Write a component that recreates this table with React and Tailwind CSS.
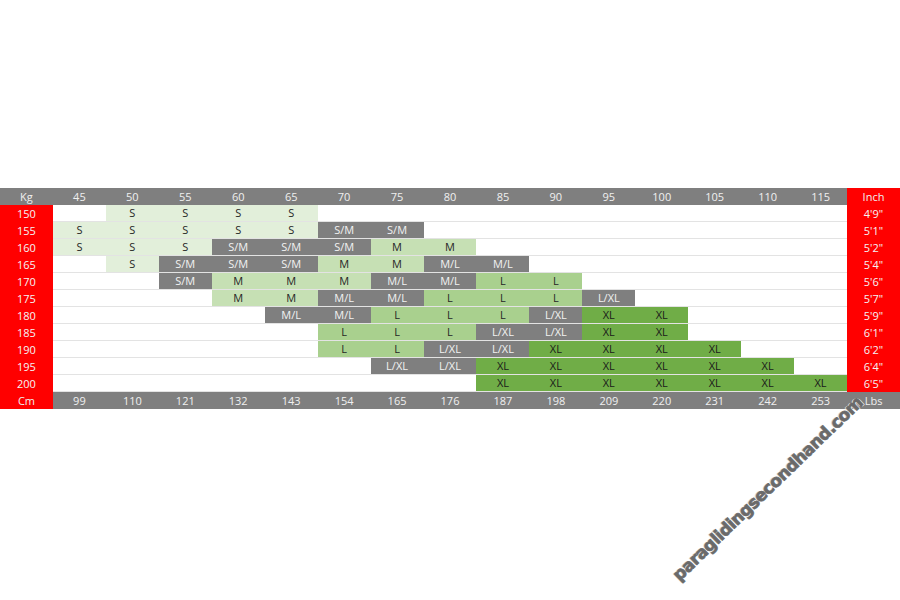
import React from "react";

const weights = [45, 50, 55, 60, 65, 70, 75, 80, 85, 90, 95, 100, 105, 110, 115];
const lbs = [99, 110, 121, 132, 143, 154, 165, 176, 187, 198, 209, 220, 231, 242, 253];

const rows = [
  ["150", "4'9\"", ["", "S", "S", "S", "S", "", "", "", "", "", "", "", "", "", ""]],
  ["155", "5'1\"", ["S", "S", "S", "S", "S", "S/M", "S/M", "", "", "", "", "", "", "", ""]],
  ["160", "5'2\"", ["S", "S", "S", "S/M", "S/M", "S/M", "M", "M", "", "", "", "", "", "", ""]],
  ["165", "5'4\"", ["", "S", "S/M", "S/M", "S/M", "M", "M", "M/L", "M/L", "", "", "", "", "", ""]],
  ["170", "5'6\"", ["", "", "S/M", "M", "M", "M", "M/L", "M/L", "L", "L", "", "", "", "", ""]],
  ["175", "5'7\"", ["", "", "", "M", "M", "M/L", "M/L", "L", "L", "L", "L/XL", "", "", "", ""]],
  ["180", "5'9\"", ["", "", "", "", "M/L", "M/L", "L", "L", "L", "L/XL", "XL", "XL", "", "", ""]],
  ["185", "6'1\"", ["", "", "", "", "", "L", "L", "L", "L/XL", "L/XL", "XL", "XL", "", "", ""]],
  ["190", "6'2\"", ["", "", "", "", "", "L", "L", "L/XL", "L/XL", "XL", "XL", "XL", "XL", "", ""]],
  ["195", "6'4\"", ["", "", "", "", "", "", "L/XL", "L/XL", "XL", "XL", "XL", "XL", "XL", "XL", ""]],
  ["200", "6'5\"", ["", "", "", "", "", "", "", "", "XL", "XL", "XL", "XL", "XL", "XL", "XL"]],
];

const style = {
  S: "bg-[#e2efda] text-[#262626]",
  M: "bg-[#c6e0b4] text-[#262626]",
  L: "bg-[#a9d08e] text-[#262626]",
  XL: "bg-[#70ad47] text-[#1a1a1a]",
  "S/M": "bg-[#7f7f7f] text-[#f2f2f2]",
  "M/L": "bg-[#7f7f7f] text-[#f2f2f2]",
  "L/XL": "bg-[#7f7f7f] text-[#f2f2f2]",
  "": "bg-white",
};

export default function App() {
  return (
    <div className="relative w-[900px] h-[600px] bg-white overflow-hidden pt-[188px] font-['Open_Sans',sans-serif] text-[11px]">
      <div className="grid grid-cols-[repeat(17,minmax(0,1fr))] h-[17px] leading-[17px] text-center text-[#f0f0f0] bg-[#7f7f7f]">
        <div>Kg</div>
        {weights.map((w) => (
          <div key={w}>{w}</div>
        ))}
        <div className="bg-[#ff0000]">Inch</div>
      </div>
      {rows.map(([cm, inch, cells]) => (
        <div key={cm} className="grid grid-cols-[repeat(17,minmax(0,1fr))] h-[17px] text-center">
          <div className="bg-[#ff0000] text-[#f4f4f4] leading-[17px]">{cm}</div>
          {cells.map((c, i) => (
            <div key={i} className="border-b border-[#e3e3e3] bg-white">
              <div className={`h-[16px] leading-[16px] ${style[c]}`}>{c}</div>
            </div>
          ))}
          <div className="bg-[#ff0000] text-[#f4f4f4] leading-[17px]">{inch}</div>
        </div>
      ))}
      <div className="grid grid-cols-[repeat(17,minmax(0,1fr))] h-[17px] leading-[17px] text-center text-[#f0f0f0] bg-[#7f7f7f]">
        <div className="bg-[#ff0000]">Cm</div>
        {lbs.map((w) => (
          <div key={w}>{w}</div>
        ))}
        <div>Lbs</div>
      </div>
      <div className="absolute left-[768px] top-[489px] -translate-x-1/2 -translate-y-1/2 -rotate-[44deg] whitespace-nowrap font-['DejaVu_Sans',sans-serif] font-bold text-[17px] tracking-[-0.6px] text-[#6a6a6a] [-webkit-text-stroke:0.7px_#6a6a6a] [text-shadow:1px_1px_0_#ffffff,-1px_-1px_0_#d6d6d6]">
        paraglidingsecondhand.com
      </div>
    </div>
  );
}
